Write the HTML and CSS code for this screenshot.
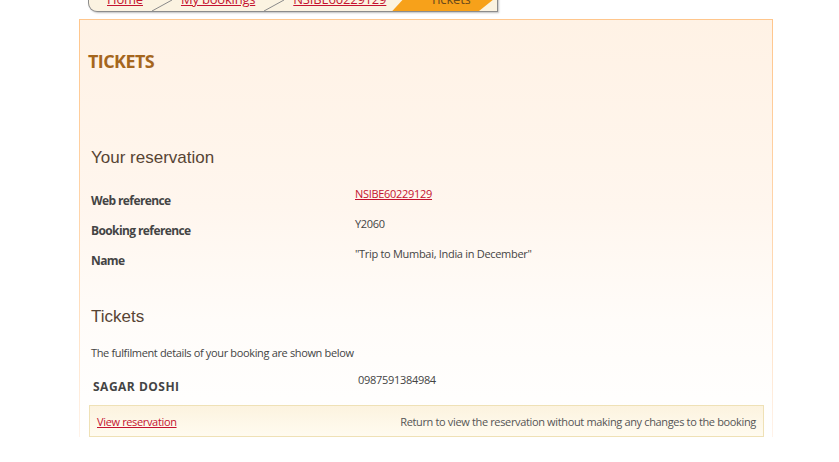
FILE: index.html
```html
<!DOCTYPE html>
<html>
<head>
<meta charset="utf-8">
<link rel="stylesheet" href="styles.css">
</head>
<body>
<nav class="crumbs">
  <a class="crumb first" href="#">Home</a>
  <svg class="sep" width="20" height="24" viewBox="0 0 20 24"><line x1="0" y1="24" x2="20" y2="13" stroke="#8a8a8a" stroke-width="1"/></svg>
  <a class="crumb" href="#">My bookings</a>
  <svg class="sep" width="20" height="24" viewBox="0 0 20 24"><line x1="0" y1="24" x2="20" y2="13" stroke="#8a8a8a" stroke-width="1"/></svg>
  <a class="crumb" href="#">NSIBE60229129</a>
  <span class="crumb current">Tickets</span>
</nav>

<main class="panel">
  <h1 class="title">TICKETS</h1>

  <section class="block res">
    <h2 class="subtitle">Your reservation</h2>
    <div class="row">
      <div class="label">Web reference</div>
      <div class="value"><a href="#">NSIBE60229129</a></div>
    </div>
    <div class="row">
      <div class="label">Booking reference</div>
      <div class="value">Y2060</div>
    </div>
    <div class="row">
      <div class="label">Name</div>
      <div class="value">"Trip to Mumbai, India in December"</div>
    </div>
  </section>

  <section class="block tix">
    <h2 class="subtitle">Tickets</h2>
    <p class="intro">The fulfilment details of your booking are shown below</p>
    <div class="row pax">
      <div class="label">SAGAR DOSHI</div>
      <div class="value">0987591384984</div>
    </div>
  </section>

  <div class="actions">
    <a href="#">View reservation</a>
    <span>Return to view the reservation without making any changes to the booking</span>
  </div>
</main>
</body>
</html>
```

FILE: styles.css
```css
html, body {
  margin: 0;
  padding: 0;
  background: #ffffff;
  font-family: "Open Sans", "DejaVu Sans", sans-serif;
  color: #444444;
}

a { color: #c4122f; }

.crumbs {
  display: flex;
  align-items: stretch;
  height: 24px;
  margin: -13px 0 0 88px;
  width: 408px;
  background: #fbf3e1;
  border: 1px solid #8c8c8c;
  border-top: 0;
  border-radius: 0 0 0 9px;
  box-shadow: 1px 1px 2px rgba(0,0,0,0.25);
  font-size: 13px;
  letter-spacing: -0.2px;
  overflow: hidden;
}

.crumb {
  display: flex;
  align-items: flex-end;
  padding: 0 9px 5px 9px;
  line-height: 14px;
  white-space: nowrap;
}
.crumb.first { padding-left: 18px; }
.sep { flex: none; display: block; }

.crumb.current {
  flex: 1;
  color: #6b4a1a;
  padding-left: 38px;
  background: #f7a11a;
  clip-path: polygon(0 100%, 22px 0, 100% 0, 100% 40%, calc(100% - 18px) 100%);
  margin-left: -3px;
}

.panel {
  margin: 7px 0 0 79px;
  width: 694px;
  border: 1px solid #ffc890;
  border-bottom: 0;
  border-image: linear-gradient(to bottom, #ffc68c 0%, #ffd9b3 60%, #fff3ea 100%) 1;
  background: linear-gradient(to bottom, #fff2e5 0%, #fff6ee 45%, #fffcf9 72%, #ffffff 100%);
  padding: 0 8px 0 9px;
  box-sizing: border-box;
}

.title {
  margin: 0;
  padding-top: 29px;
  font-size: 18px;
  line-height: 24px;
  font-weight: bold;
  color: #a5661d;
  letter-spacing: -0.6px;
  margin-left: -1px;
}

.subtitle {
  margin: 0;
  font-family: "Liberation Sans", Arial, sans-serif;
  font-weight: normal;
  font-size: 17px;
  line-height: 20px;
  color: #574434;
}

.block { padding-left: 2px; }
.res { margin-top: 75px; }
.res .subtitle { margin-bottom: 19px; }

.row {
  display: flex;
  height: 30px;
}
.label {
  width: 264px;
  flex: none;
  font-size: 12px;
  font-weight: bold;
  letter-spacing: -0.6px;
  color: #444444;
  padding-top: 6px;
  line-height: 16px;
}
.value {
  font-size: 11px;
  line-height: 14px;
  letter-spacing: -0.3px;
  color: #444444;
}

.tix { margin-top: 30px; }
.intro {
  margin: 19px 0 0 0;
  font-size: 11px;
  line-height: 14px;
  letter-spacing: -0.35px;
  color: #444444;
}
.pax { margin-top: 13px; height: 32px; }
.pax .label { padding-left: 2px; width: 265px; padding-top: 6px; letter-spacing: 0.5px; }

.actions {
  display: flex;
  justify-content: space-between;
  align-items: center;
  height: 30px;
  padding: 0 7px 0 7px;
  border: 1px solid #efe1b6;
  background: linear-gradient(to bottom, #fcf3df, #fffbf0);
  font-size: 11px;
  letter-spacing: -0.35px;
  color: #555555;
}
```
